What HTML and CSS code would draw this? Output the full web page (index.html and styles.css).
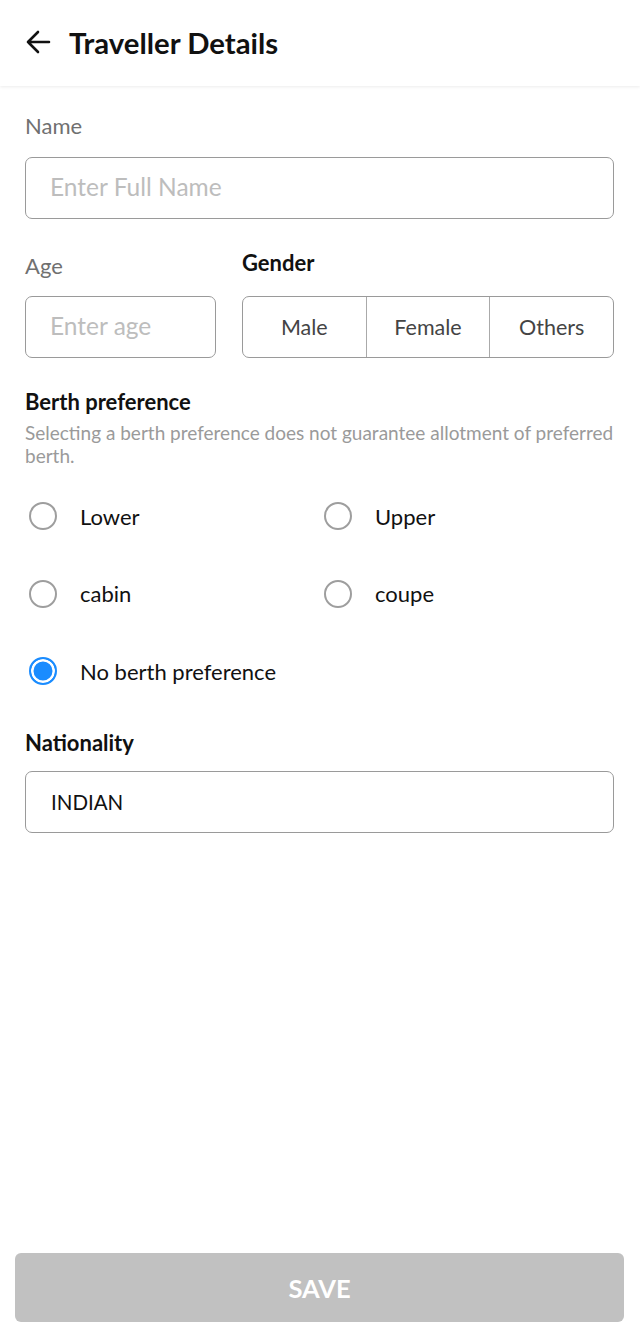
FILE: index.html
```html
<!DOCTYPE html>
<html>
<head>
<meta charset="utf-8">
<link rel="stylesheet" href="styles.css">
</head>
<body>
<div class="page">
  <header class="header">
    <svg class="back" width="28" height="28" viewBox="0 0 28 28"><path d="M25 14H4M14 4L4 14l10 10" fill="none" stroke="#111" stroke-width="2.6" stroke-linecap="round" stroke-linejoin="round"/></svg>
    <h1 class="title">Traveller Details</h1>
  </header>
  <main class="content">
    <div class="field">
      <div class="label">Name</div>
      <div class="input"><span class="placeholder">Enter Full Name</span></div>
    </div>
    <div class="row">
      <div class="field age">
        <div class="label">Age</div>
        <div class="input"><span class="placeholder">Enter age</span></div>
      </div>
      <div class="field gender">
        <div class="label strong">Gender</div>
        <div class="segment">
          <div class="seg">Male</div>
          <div class="seg">Female</div>
          <div class="seg">Others</div>
        </div>
      </div>
    </div>
    <div class="berth">
      <div class="label strong">Berth preference</div>
      <div class="hint">Selecting a berth preference does not guarantee allotment of preferred berth.</div>
      <div class="radios">
        <div class="radio"><span class="circle"></span><span>Lower</span></div>
        <div class="radio"><span class="circle"></span><span>Upper</span></div>
        <div class="radio"><span class="circle"></span><span>cabin</span></div>
        <div class="radio"><span class="circle"></span><span>coupe</span></div>
        <div class="radio wide"><span class="circle on"></span><span>No berth preference</span></div>
      </div>
    </div>
    <div class="field nat">
      <div class="label strong">Nationality</div>
      <div class="input"><span class="value">INDIAN</span></div>
    </div>
  </main>
  <footer class="footer">
    <button class="save">SAVE</button>
  </footer>
</div>
</body>
</html>
```
FILE: styles.css
```css
* { box-sizing: border-box; }
html, body { margin: 0; padding: 0; background: #fff; }
body { font-family: Lato, "Noto Sans", sans-serif; color: #111; }
.page { width: 640px; height: 1337px; display: flex; flex-direction: column; }
.header {
  height: 86px; display: flex; align-items: center; gap: 17px;
  padding: 0 0 2px 24px;
  box-shadow: 0 1px 3px rgba(0,0,0,0.08);
}
.back { display: block; }
.title { margin: 0; font-size: 29.3px; font-weight: 700; color: #111; }
.content { flex: 1; padding: 28px 26px 0 25px; display: flex; flex-direction: column; }
.label { font-size: 22px; color: #707070; line-height: 24px; margin-bottom: 19px; }
.label.strong { color: #111; font-weight: 700; }
.input {
  height: 62px; border: 1.5px solid #9a9a9a; border-radius: 7px;
  display: flex; align-items: center; padding-left: 24px;
}
.placeholder { font-size: 24.5px; color: #bdbdbd; margin-bottom: 3px; }
.value { font-size: 20.5px; color: #111; padding-left: 1px; }
.row { display: flex; gap: 26px; margin-top: 31px; }
.age { width: 191px; }
.age .label { margin-top: 4px; margin-bottom: 18px; }
.gender { flex: 1; }
.gender .label { margin-top: 1px; margin-bottom: 21px; }
.segment {
  height: 62px; border: 1.5px solid #9a9a9a; border-radius: 7px; display: flex;
}
.seg {
  flex: 1; display: flex; align-items: center; justify-content: center;
  font-size: 21.5px; color: #444;
}
.seg + .seg { border-left: 1.5px solid #aaa; }
.berth { margin-top: 32px; }
.berth .label { margin-bottom: 7px; }
.hint { font-size: 19px; color: #9a9a9a; line-height: 23px; }
.radios { display: grid; grid-template-columns: 295px 1fr; row-gap: 49.5px; margin-top: 35px; }
.radio { display: flex; align-items: center; gap: 23px; font-size: 22px; height: 28px; padding-left: 4px; }
.radio.wide { grid-column: 1 / span 2; }
.circle {
  width: 28px; height: 28px; border-radius: 50%; border: 2.5px solid #9e9e9e; flex: none;
}
.circle.on { border-color: #1a8cff; background: #1a8cff; box-shadow: inset 0 0 0 2.5px #fff; }
.nat { margin-top: 46px; }
.nat .label { margin-bottom: 16px; }
.footer { padding: 0 16px 15px 15px; }
.save {
  width: 100%; height: 69px; border: none; border-radius: 6px; background: #c1c1c1;
  color: #fff; font-family: Lato, sans-serif; font-weight: 700; font-size: 25.5px;
}
```
